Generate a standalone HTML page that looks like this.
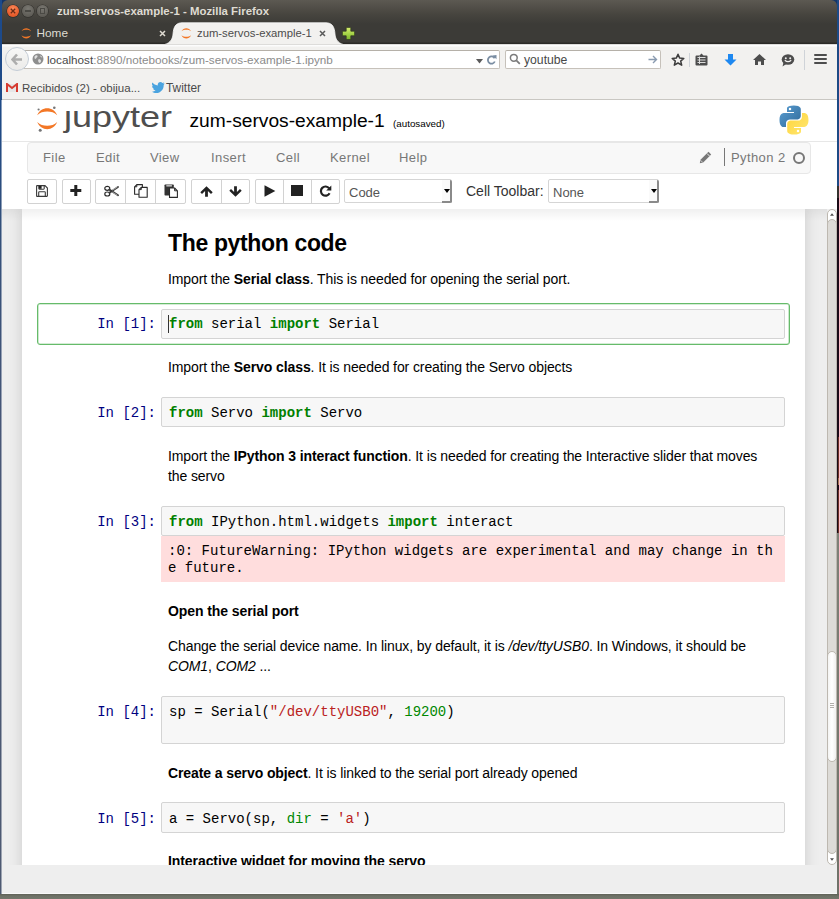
<!DOCTYPE html>
<html><head><meta charset="utf-8">
<style>
*{box-sizing:border-box;}
html,body{margin:0;padding:0;}
body{width:839px;height:899px;overflow:hidden;position:relative;background:#5f6257;font-family:"Liberation Sans",sans-serif;}
.a{position:absolute;}
svg{display:block;}
#lstrip{left:0;top:0;width:2px;height:899px;background:linear-gradient(#1c4a8c 0,#1f4a86 120px,#34507a 230px,#4a5877 450px,#4e5a72 899px);}
#lstrip2{left:1px;top:100px;width:1px;height:799px;background:rgba(255,255,255,0.45);}
#topblue{left:0;top:0;width:839px;height:10px;background:#163566;}
#rstrip{left:837px;top:0;width:2px;height:899px;background:linear-gradient(#1d4a86 0,#1d4a86 186px,#34322e 186px,#34322e 198px,transparent 198px,transparent 533px,#7e8076 533px,#6f7168);}
#rstrip2{left:837px;top:198px;width:2px;height:335px;background:#1a0b17;}
#rstrip3{left:838px;top:437px;width:1px;height:96px;background:linear-gradient(#6a3025 0,#6a3025 41px,#a07050 41px,#a07050 48px,#1a0b17 48px,#1a0b17 53px,#6a3025 53px);}
#bstrip{left:0;top:894px;width:839px;height:5px;background:linear-gradient(#5f6157,#6e7166 40%,#73766b);}
#titlebar{left:2px;top:0;width:835px;height:44px;background:linear-gradient(#5c5952 0,#47453f 14px,#3c3b37 24px,#3c3b37 42px,#2b2a27 43px);border-radius:6px 6px 0 0;}
#navbar{left:2px;top:44px;width:835px;height:56px;background:linear-gradient(#dddcda 0,#dddcda 1px,#fcfcfc 1px,#fcfcfc 2px,#f2f1ef 3px);border-bottom:1px solid #c9c7c2;}
#page{left:2px;top:100px;width:835px;height:765px;background:#fff;overflow:hidden;}
#statusbar{left:2px;top:865px;width:835px;height:29px;background:#eeeeee;border-bottom:1px solid #f8f8f8;}
.wbtn{width:12px;height:12px;border-radius:50%;top:5px;}
.ttl{font-weight:bold;color:#dfdbd2;font-size:11.4px;line-height:12px;white-space:nowrap;}
.nb{white-space:nowrap;line-height:15px;}
.mi{top:150px;font-size:13px;letter-spacing:0.4px;line-height:15px;color:#777;white-space:nowrap;}
.tb{top:179px;height:25px;background:#fff;border:1px solid #d2d2d2;border-radius:2px;}
.tbd{top:179px;height:25px;width:1px;background:#d2d2d2;}
.sel{top:179px;height:24px;background:#fff;border:1px solid #d5d5d5;border-radius:2px;font-size:13px;line-height:16px;color:#555;}
.sel span{position:absolute;left:4px;top:5px;}
.h2{font-size:23px;letter-spacing:-0.35px;font-weight:bold;line-height:26px;color:#000;white-space:nowrap;}
.p{font-size:14px;letter-spacing:-0.1px;line-height:20px;color:#000;white-space:nowrap;}
.h4{font-size:14px;letter-spacing:-0.08px;font-weight:bold;line-height:16px;color:#000;white-space:nowrap;}
.pr{left:38px;width:118px;text-align:right;font-family:"Liberation Mono",monospace;font-size:14px;line-height:17px;color:#000080;white-space:nowrap;}
.ia{left:161px;width:624px;background:#f7f7f7;border:1px solid #d4d4d4;border-radius:2px;}
.cd{left:169px;font-family:"Liberation Mono",monospace;font-size:14px;line-height:17px;color:#000;white-space:nowrap;}
.k{color:#008000;font-weight:bold;}
.s{color:#ba2121;}
.n{color:#080;}
.sa{position:absolute;right:-1px;top:0;width:10px;height:23px;background:#fafafa;border-right:2px solid #8a8a8a;border-bottom:2px solid #8a8a8a;border-radius:0 2px 2px 0;}
.sa:after{content:"";position:absolute;left:2px;top:9px;border-left:3px solid transparent;border-right:3px solid transparent;border-top:4px solid #000;}
.tabtxt{font-size:11px;line-height:12px;white-space:nowrap;}
</style></head>
<body>
<div id="topblue" class="a"></div><div id="lstrip" class="a"></div><div id="lstrip2" class="a"></div>
<div id="rstrip" class="a"></div><div id="rstrip2" class="a"></div><div id="rstrip3" class="a"></div>
<div id="bstrip" class="a"></div>
<div id="titlebar" class="a"></div>
<!-- window buttons -->
<div class="a" style="left:7.3px;top:5.2px;width:11.8px;height:11.8px;border-radius:50%;background:radial-gradient(circle at 50% 30%,#fb8a5a,#ec6232 55%,#d4501f);box-shadow:0 0 0 0.6px rgba(30,20,15,0.6);"></div>
<svg class="a" style="left:10.2px;top:8.1px" width="6" height="6" viewBox="0 0 6 6"><path d="M0.8 0.8L5.2 5.2M5.2 0.8L0.8 5.2" stroke="#6a2c16" stroke-width="1.3"/></svg>
<div class="a" style="left:22px;top:5.2px;width:11.8px;height:11.8px;border-radius:50%;background:radial-gradient(circle at 50% 30%,#7a7872,#63615b 60%,#57554f);box-shadow:0 0 0 0.6px rgba(30,30,28,0.6);"></div>
<div class="a" style="left:25px;top:10.3px;width:6px;height:1.6px;background:#4a4944;"></div>
<div class="a" style="left:36.5px;top:5.2px;width:11.8px;height:11.8px;border-radius:50%;background:radial-gradient(circle at 50% 30%,#7a7872,#63615b 60%,#57554f);box-shadow:0 0 0 0.6px rgba(30,30,28,0.6);"></div>
<div class="a" style="left:40.3px;top:8px;width:4.4px;height:6.2px;border:1.3px solid #4a4944;"></div>
<div class="a ttl" style="left:57px;top:5px;">zum-servos-example-1 - Mozilla Firefox</div>

<!-- inactive tab -->
<svg class="a" style="left:20.5px;top:28.2px" width="10.6" height="10.6" viewBox="0 0 12 12"><path d="M0.5 3.8C1.8 1.3 3.8 0.2 6 0.2S10.2 1.3 11.5 3.8C9.8 2.6 8 2.1 6 2.1S2.2 2.6 0.5 3.8Z" fill="#f37726"/><path d="M0.5 8.2C1.8 10.7 3.8 11.8 6 11.8S10.2 10.7 11.5 8.2C9.8 9.4 8 9.9 6 9.9S2.2 9.4 0.5 8.2Z" fill="#f37726"/></svg>
<div class="a tabtxt" style="left:36.5px;top:27px;color:#dfdbd2;font-size:11.8px;">Home</div>
<svg class="a" style="left:158.5px;top:30px" width="7" height="7" viewBox="0 0 7 7"><path d="M1 1L6 6M6 1L1 6" stroke="#dfdbd2" stroke-width="1.5"/></svg>
<!-- active tab -->
<svg class="a" style="left:0;top:0" width="839" height="50" viewBox="0 0 839 50"><path d="M160 45 C167 45 171.5 42 172.8 36 L173.3 31.5 C174.2 25.5 177 22.8 182 22.8 L326 22.8 C331 22.8 333.8 25.5 334.7 31.5 L335.2 36 C336.5 42 341 45 348 45 Z" fill="#f2f1ef" stroke="#fbfbfb" stroke-width="0.8"/></svg>
<svg class="a" style="left:181.2px;top:28.2px" width="10.6" height="10.6" viewBox="0 0 12 12"><path d="M0.5 3.8C1.8 1.3 3.8 0.2 6 0.2S10.2 1.3 11.5 3.8C9.8 2.6 8 2.1 6 2.1S2.2 2.6 0.5 3.8Z" fill="#f37726"/><path d="M0.5 8.2C1.8 10.7 3.8 11.8 6 11.8S10.2 10.7 11.5 8.2C9.8 9.4 8 9.9 6 9.9S2.2 9.4 0.5 8.2Z" fill="#f37726"/></svg>
<div class="a tabtxt" style="left:197px;top:27px;color:#4c4c4c;font-size:11.3px;">zum-servos-example-1</div>
<svg class="a" style="left:319.3px;top:30px" width="7" height="7" viewBox="0 0 7 7"><path d="M1 1L6 6M6 1L1 6" stroke="#5a5a5a" stroke-width="1.5"/></svg>
<!-- new tab plus -->
<svg class="a" style="left:341.5px;top:27.2px" width="13" height="13" viewBox="0 0 13 13"><defs><linearGradient id="gp" x1="0" y1="0" x2="0" y2="1"><stop offset="0" stop-color="#d8ee70"/><stop offset="0.5" stop-color="#a8d44a"/><stop offset="1" stop-color="#7cb22c"/></linearGradient></defs><path d="M4.2 0.4H8.8V4.2H12.6V8.8H8.8V12.6H4.2V8.8H0.4V4.2H4.2Z" fill="url(#gp)" stroke="#2f3a1c" stroke-width="0.7"/></svg>

<div id="navbar" class="a"></div>
<!-- url field -->
<div class="a" style="left:22px;top:50px;width:478px;height:19px;background:#fff;border:1px solid #c6c1ba;border-top-color:#b5b0a8;border-radius:2px;"></div>
<!-- back button -->
<div class="a" style="left:5px;top:47px;width:24px;height:24px;border-radius:50%;background:linear-gradient(#f7f7f6,#ecebe9);border:1px solid #c3ccd6;"></div>
<svg class="a" style="left:11px;top:53px" width="12" height="13" viewBox="0 0 12 13"><path d="M6 1.5L1.5 6.5L6 11.5M1.8 6.5H11" fill="none" stroke="#adadad" stroke-width="2.6" stroke-linejoin="miter"/></svg>
<!-- globe -->
<svg class="a" style="left:32px;top:53px" width="12" height="12" viewBox="0 0 12 12"><circle cx="6" cy="6" r="5.5" fill="#8e8e8e"/><path d="M2.5 3.5C3.5 2 5 1.8 5.5 2.8C6 4 4.5 4.5 4 5.5C3.5 6.5 2.2 6 2.5 3.5Z" fill="#e0e0e0"/><path d="M6.5 6.5C7.5 6 9 6.5 9 8C9 9.5 7.5 10.5 6.8 9.5C6.2 8.5 5.8 7 6.5 6.5Z" fill="#e0e0e0"/><path d="M8 2.5C9 2.8 10 3.5 10.3 4.5C9.5 4.5 8.5 4 8 2.5Z" fill="#e0e0e0"/></svg>
<div class="a nb" style="left:47px;top:52px;font-size:11.7px;color:#484848;">localhost<span style="color:#8b8b8b">:8890/notebooks/zum-servos-example-1.ipynb</span></div>
<svg class="a" style="left:476px;top:59px" width="7" height="5" viewBox="0 0 7 5"><path d="M0 0H7L3.5 4.5Z" fill="#5a5a5a"/></svg>
<svg class="a" style="left:487px;top:54px" width="10" height="11" viewBox="0 0 10 11"><path d="M7.6 4.2A3.6 3.6 0 1 0 7.8 7.5" fill="none" stroke="#7a8da2" stroke-width="1.8"/><path d="M5.5 1.5L9.5 1V5.2Z" fill="#7a8da2"/></svg>
<!-- search -->
<div class="a" style="left:505px;top:50px;width:156px;height:19px;background:#fff;border:1px solid #c6c1ba;border-top-color:#b5b0a8;border-radius:2px;"></div>
<svg class="a" style="left:509px;top:53px" width="12" height="12" viewBox="0 0 12 12"><circle cx="4.8" cy="4.8" r="3.4" fill="none" stroke="#7b7b7b" stroke-width="1.5"/><path d="M7.3 7.3L10.8 10.8" stroke="#7b7b7b" stroke-width="1.8"/></svg>
<div class="a nb" style="left:524px;top:53px;font-size:12.2px;color:#484848;">youtube</div>
<svg class="a" style="left:648px;top:55px" width="10" height="9" viewBox="0 0 10 9"><path d="M0.5 4.5H8.5M5 1L8.5 4.5L5 8" fill="none" stroke="#8a9bb0" stroke-width="1.4"/></svg>
<!-- star -->
<svg class="a" style="left:671px;top:53px" width="14" height="14" viewBox="0 0 14 14"><path d="M7 1.3L8.7 5.1L12.8 5.4L9.7 8.1L10.7 12.2L7 10L3.3 12.2L4.3 8.1L1.2 5.4L5.3 5.1Z" fill="none" stroke="#3d3d3d" stroke-width="1.5" stroke-linejoin="round"/></svg>
<div class="a" style="left:689px;top:53px;width:1px;height:14px;background:#cfd3d8;"></div>
<!-- reading list -->
<svg class="a" style="left:695px;top:53px" width="13" height="13" viewBox="0 0 13 13"><path d="M6.5 0.5L8.5 2.5H11.5Q12.5 2.5 12.5 3.5V11.5Q12.5 12.5 11.5 12.5H1.5Q0.5 12.5 0.5 11.5V3.5Q0.5 2.5 1.5 2.5H4.5Z" fill="#4d4d4d"/><path d="M2.5 4.5H10.5M2.5 7H10.5M2.5 9.5H10.5" stroke="#dcdcdc" stroke-width="1"/><path d="M4.5 3.5V11" stroke="#dcdcdc" stroke-width="1"/></svg>
<!-- download -->
<svg class="a" style="left:724px;top:54px" width="13" height="12" viewBox="0 0 13 12"><path d="M4 0H9V5.5H12.5L6.5 11.5L0.5 5.5H4Z" fill="#1e88f0"/></svg>
<!-- home -->
<svg class="a" style="left:753px;top:54px" width="13" height="11" viewBox="0 0 13 11"><path d="M6.5 0L13 6H11V11H8V7.5H5V11H2V6H0Z" fill="#4d4d4d"/></svg>
<!-- chat -->
<svg class="a" style="left:781px;top:54px" width="14" height="13" viewBox="0 0 14 13"><ellipse cx="7" cy="5.5" rx="6.3" ry="5.2" fill="#4d4d4d"/><path d="M2.5 8.5L1.5 12.5L6 9.5Z" fill="#4d4d4d"/><circle cx="4.8" cy="4.2" r="1" fill="#f2f1f0"/><circle cx="9.2" cy="4.2" r="1" fill="#f2f1f0"/><path d="M3.8 6.2Q7 9.2 10.2 6.2" fill="none" stroke="#f2f1f0" stroke-width="1.2"/></svg>
<div class="a" style="left:804px;top:50px;width:1px;height:20px;background:#cfd3d8;"></div>
<!-- menu -->
<div class="a" style="left:814px;top:54px;width:13px;height:2px;background:#4d4d4d;border-radius:1px;"></div>
<div class="a" style="left:814px;top:58px;width:13px;height:2px;background:#4d4d4d;border-radius:1px;"></div>
<div class="a" style="left:814px;top:62px;width:13px;height:2px;background:#4d4d4d;border-radius:1px;"></div>
<!-- bookmarks -->
<svg class="a" style="left:6px;top:83px" width="12" height="9" viewBox="0 0 12 9"><path d="M1 1H11V9H1Z" fill="#e6e6e6"/><path d="M1 9V1L6 5L11 1V9" fill="none" stroke="#d63b30" stroke-width="2"/></svg>
<div class="a nb" style="left:22px;top:81px;font-size:11.5px;color:#4a4a4a;">Recibidos (2) - obijua...</div>
<svg class="a" style="left:152px;top:82px" width="13" height="11" viewBox="0 0 13 11"><path d="M12.5 1.3C12 1.5 11.5 1.7 11 1.7C11.5 1.4 12 0.8 12.2 0.3C11.6 0.6 11 0.9 10.4 1C9.9 0.4 9.2 0.1 8.4 0.1C6.9 0.1 5.7 1.3 5.7 2.8C5.7 3 5.7 3.2 5.8 3.4C3.5 3.3 1.6 2.2 0.3 0.6C0.1 1 0 1.5 0 1.9C0 2.9 0.5 3.7 1.2 4.2C0.8 4.2 0.4 4.1 0 3.9C0 5.2 1 6.3 2.2 6.6C2 6.6 1.7 6.7 1.5 6.7C1.3 6.7 1.1 6.7 1 6.6C1.3 7.7 2.4 8.5 3.6 8.5C2.6 9.2 1.5 9.7 0.2 9.7H0C1.2 10.5 2.6 11 4.1 11C9 11 11.7 6.9 11.7 3.4V3C12.1 2.6 12.4 2 12.5 1.3Z" fill="#4aa3df"/></svg>
<div class="a nb" style="left:166px;top:81px;font-size:11.9px;color:#4a4a4a;">Twitter</div>

<div id="page" class="a"></div>
<!-- jupyter header -->
<svg class="a" style="left:36px;top:106px" width="24" height="26" viewBox="0 0 24 26">
 <path d="M1.2 9.3C3 4.8 7 2.3 11.2 2.3S19.4 4.8 21.2 9.3C18.5 6.6 15 5.6 11.2 5.6S3.9 6.6 1.2 9.3Z" fill="#f37726"/>
 <path d="M1.2 16C3 20.5 7 23.2 11.2 23.2S19.4 20.5 21.2 16C18.5 18.7 15 19.8 11.2 19.8S3.9 18.7 1.2 16Z" fill="#f37726"/>
 <circle cx="2.6" cy="3.5" r="1.1" fill="#767677"/><circle cx="18.3" cy="1.7" r="1.3" fill="#767677"/><circle cx="4.2" cy="24.2" r="1.5" fill="#767677"/>
</svg>
<div class="a" style="left:64px;top:100px;font-size:30px;line-height:34px;color:#4e4e4e;white-space:nowrap;transform:scaleX(1.2);transform-origin:0 0;">&#x237;upyter</div>
<div class="a" style="left:189.5px;top:110px;font-size:19.2px;line-height:22px;color:#000;white-space:nowrap;">zum-servos-example-1</div>
<div class="a" style="left:393px;top:118px;font-size:9.8px;line-height:12px;color:#000;white-space:nowrap;">(autosaved)</div>
<!-- python logo -->
<svg class="a" style="left:779px;top:105px" width="30" height="30" viewBox="0 0 30 30">
 <defs><linearGradient id="pb" x1="0" y1="0" x2="1" y2="1"><stop offset="0" stop-color="#5a9fd4"/><stop offset="1" stop-color="#306998"/></linearGradient>
 <linearGradient id="py" x1="0" y1="0" x2="1" y2="1"><stop offset="0" stop-color="#ffd43b"/><stop offset="1" stop-color="#ffe873"/></linearGradient></defs>
 <path d="M14.8 0.5C7.5 0.5 8 3.6 8 3.6V6.9H15V8H5.2C5.2 8 0.5 7.5 0.5 14.9S4.6 22 4.6 22H7V18.5C7 18.5 6.9 14.4 11 14.4H17.9C17.9 14.4 21.8 14.5 21.8 10.7V4.3C21.8 4.3 22.4 0.5 14.8 0.5Z M11 2.7A1.25 1.25 0 1 1 11 5.2A1.25 1.25 0 1 1 11 2.7Z" fill="url(#pb)" fill-rule="evenodd"/>
 <path d="M15.2 29.5C22.5 29.5 22 26.4 22 26.4V23.1H15V22H24.8C24.8 22 29.5 22.5 29.5 15.1S25.4 8 25.4 8H23V11.5C23 11.5 23.1 15.6 19 15.6H12.1C12.1 15.6 8.2 15.5 8.2 19.3V25.7C8.2 25.7 7.6 29.5 15.2 29.5Z M19 27.3A1.25 1.25 0 1 1 19 24.8A1.25 1.25 0 1 1 19 27.3Z" fill="url(#py)" fill-rule="evenodd"/>
</svg>
<div class="a" style="left:2px;top:141px;width:835px;height:1px;background:#e7e7e7;"></div>
<!-- menubar -->
<div class="a" style="left:27px;top:142px;width:784px;height:32px;background:#f8f8f8;border:1px solid #e7e7e7;border-radius:4px;"></div>
<div class="a mi" style="left:43px;">File</div>
<div class="a mi" style="left:96px;">Edit</div>
<div class="a mi" style="left:150px;">View</div>
<div class="a mi" style="left:211px;">Insert</div>
<div class="a mi" style="left:276px;">Cell</div>
<div class="a mi" style="left:330px;">Kernel</div>
<div class="a mi" style="left:399px;">Help</div>
<svg class="a" style="left:699px;top:151px" width="13" height="13" viewBox="0 0 13 13"><path d="M9.5 0.8L12.2 3.5L4.2 11.5L0.8 12.2L1.5 8.8Z" fill="#777"/><path d="M8 2.5L10.5 5" stroke="#f8f8f8" stroke-width="0.9"/><path d="M1.6 9.3L3.7 11.4" stroke="#f8f8f8" stroke-width="0.7"/></svg>
<div class="a" style="left:724px;top:148px;width:1px;height:18px;background:#777;"></div>
<div class="a mi" style="left:731px;">Python 2</div>
<div class="a" style="left:793px;top:152px;width:12px;height:12px;border-radius:50%;border:2px solid #777;"></div>
<!-- toolbar -->
<div class="a tb" style="left:27px;width:30px;"></div>
<div class="a tb" style="left:62px;width:29px;"></div>
<div class="a tb" style="left:95px;width:91px;"></div>
<div class="a tbd" style="left:125px;"></div><div class="a tbd" style="left:155px;"></div>
<div class="a tb" style="left:191px;width:59px;"></div>
<div class="a tbd" style="left:221px;"></div>
<div class="a tb" style="left:255px;width:85px;"></div>
<div class="a tbd" style="left:283px;"></div><div class="a tbd" style="left:311px;"></div>
<!-- save icon -->
<svg class="a" style="left:36px;top:185px" width="12" height="12" viewBox="0 0 12 12"><path d="M1.2 0.6H9L11.4 3V10.8Q11.4 11.4 10.8 11.4H1.2Q0.6 11.4 0.6 10.8V1.2Q0.6 0.6 1.2 0.6Z" fill="none" stroke="#3a3a3a" stroke-width="1.1"/><path d="M2.8 0.8V3.6Q2.8 4.2 3.4 4.2H7.6Q8.2 4.2 8.2 3.6V0.8" fill="none" stroke="#3a3a3a" stroke-width="1.1"/><rect x="3" y="1" width="2.6" height="2.8" fill="#222"/><path d="M2.7 11.2V7.4Q2.7 6.8 3.3 6.8H8.7Q9.3 6.8 9.3 7.4V11.2" fill="none" stroke="#3a3a3a" stroke-width="1.1"/></svg>
<!-- plus -->
<svg class="a" style="left:70px;top:185px" width="12" height="11" viewBox="0 0 12 11"><path d="M4.3 0H7.3V4H11.3V7H7.3V11H4.3V7H0.3V4H4.3Z" fill="#222"/></svg>
<!-- scissors -->
<svg class="a" style="left:104px;top:185px" width="15" height="12" viewBox="0 0 15 12"><ellipse cx="3.3" cy="3.3" rx="2.5" ry="2" fill="none" stroke="#2a2a2a" stroke-width="1.2"/><ellipse cx="3.3" cy="9" rx="2.5" ry="2" fill="none" stroke="#2a2a2a" stroke-width="1.2"/><path d="M5.4 4.6L14 10.3M5.4 7.7L14 2" stroke="#3a3a3a" stroke-width="1.9" stroke-linecap="round"/><path d="M8.3 7.1L13.4 10.2M8.3 5.2L13.4 2.1" stroke="#e6e6e6" stroke-width="0.6"/></svg>
<!-- copy -->
<svg class="a" style="left:134px;top:184px" width="15" height="14" viewBox="0 0 15 14"><path d="M2.8 0.6H8.4V10.2H0.6V2.8Z" fill="#fff" stroke="#2a2a2a" stroke-width="1.1" stroke-linejoin="round"/><path d="M2.8 0.8V2.8H0.8" fill="none" stroke="#2a2a2a" stroke-width="1"/><path d="M7.3 3.4H13.2V13.2H5V5.6Z" fill="#fff" stroke="#2a2a2a" stroke-width="1.1" stroke-linejoin="round"/><path d="M7.3 3.6V5.6H5.2" fill="none" stroke="#2a2a2a" stroke-width="1"/></svg>
<!-- paste -->
<svg class="a" style="left:164px;top:184px" width="15" height="14" viewBox="0 0 15 14"><rect x="0.5" y="0.4" width="9.3" height="11.2" rx="0.8" fill="#333"/><rect x="2.3" y="1" width="5.6" height="1.6" fill="#b8b8b8"/><path d="M5.5 4H10.6L13.4 6.8V13.4H5.5Z" fill="#fff" stroke="#2a2a2a" stroke-width="1.1" stroke-linejoin="round"/><path d="M10.6 4.2V6.8H13.2" fill="none" stroke="#2a2a2a" stroke-width="1"/></svg>
<!-- up -->
<svg class="a" style="left:200px;top:186px" width="13" height="11" viewBox="0 0 13 11"><path d="M6.5 0.3L12.7 6.3L11 8L7.9 5V10.8H5.1V5L2 8L0.3 6.3Z" fill="#222"/></svg>
<!-- down -->
<svg class="a" style="left:229px;top:186px" width="13" height="11" viewBox="0 0 13 11"><path d="M6.5 10.7L12.7 4.7L11 3L7.9 6V0.2H5.1V6L2 3L0.3 4.7Z" fill="#222"/></svg>
<!-- play -->
<svg class="a" style="left:264px;top:185px" width="12" height="12" viewBox="0 0 12 12"><path d="M0.5 0.3L11.3 6L0.5 11.7Z" fill="#222"/></svg>
<!-- stop -->
<div class="a" style="left:291px;top:185px;width:12px;height:11px;background:#222;"></div>
<!-- restart -->
<svg class="a" style="left:319px;top:185px" width="13" height="12" viewBox="0 0 13 12"><path d="M10.2 3.3A4.6 4.6 0 1 0 10.6 8.3" fill="none" stroke="#222" stroke-width="2.2"/><path d="M12.3 0.5V5.6H7.2Z" fill="#222"/></svg>
<!-- selects -->
<div class="a sel" style="left:344px;width:108px;"><span>Code</span><i class="sa"></i></div>
<div class="a" style="left:466px;top:183px;font-size:14px;line-height:16px;color:#333;white-space:nowrap;">Cell Toolbar:</div>
<div class="a sel" style="left:548px;width:111px;"><span>None</span><i class="sa"></i></div>

<!-- notebook site -->
<div class="a" style="left:2px;top:209px;width:835px;height:656px;background:#eee;overflow:hidden;">
 <div class="a" style="left:20px;top:0;width:783px;height:700px;background:#fff;box-shadow:0 0 12px 1px rgba(87,87,87,0.2);"></div>
 <div class="a" style="left:0;top:0;width:835px;height:656px;box-shadow:none;"></div>
</div>
<!-- scrollbar -->
<div class="a" style="left:827px;top:209px;width:10px;height:656px;background:#fff;border:1px solid #bdb8b0;border-radius:5px;"></div>
<div class="a" style="left:827px;top:219px;width:10px;height:635px;background:#dddbd7;border:1px solid #bdb8b0;border-radius:5px;"></div>
<svg class="a" style="left:829px;top:212px" width="6" height="5" viewBox="0 0 6 5"><path d="M1 3.8L3 1.2L5 3.8Z" fill="#505050"/></svg>
<div class="a" style="left:827px;top:651px;width:10px;height:111px;background:linear-gradient(90deg,#f4f4f3,#fff 50%,#f0efee);border:1px solid #bdb8b0;border-radius:5px;"></div>
<div class="a" style="left:830px;top:703px;width:4px;height:1px;background:#b0aeaa;"></div>
<div class="a" style="left:830px;top:705px;width:4px;height:1px;background:#b0aeaa;"></div>
<div class="a" style="left:830px;top:707px;width:4px;height:1px;background:#b0aeaa;"></div>

<svg class="a" style="left:829px;top:857px" width="6" height="5" viewBox="0 0 6 5"><path d="M1 1.2L3 3.8L5 1.2Z" fill="#505050"/></svg>
<!-- notebook content -->
<div class="a" style="left:2px;top:209px;width:825px;height:656px;overflow:hidden;">
 <div class="a" style="left:-2px;top:-209px;width:839px;height:899px;">
  <div class="a h2" style="left:168px;top:230px;">The python code</div>
  <div class="a p" style="left:168px;top:269px;">Import the <b>Serial class</b>. This is needed for opening the serial port.</div>
  <div class="a" style="left:37px;top:303px;width:753px;height:42px;border:1px solid #66bb6a;border-radius:3px;box-shadow:inset 0 0 0 0.6px rgba(102,187,106,0.55);"></div>
  <div class="a pr" style="top:316px;">In&nbsp;[1]:</div>
  <div class="a ia" style="top:309px;height:30px;"></div>
  <div class="a cd" style="top:316px;"><span class="k">from</span> serial <span class="k">import</span> Serial</div>
  <div class="a" style="left:168px;top:315px;width:1px;height:18px;background:#333;"></div>
  <div class="a p" style="left:168px;top:357px;">Import the <b>Servo class</b>. It is needed for creating the Servo objects</div>
  <div class="a pr" style="top:405px;">In&nbsp;[2]:</div>
  <div class="a ia" style="top:397px;height:30px;"></div>
  <div class="a cd" style="top:405px;"><span class="k">from</span> Servo <span class="k">import</span> Servo</div>
  <div class="a p" style="left:168px;top:446px;">Import the <b>IPython 3 interact function</b>. It is needed for creating the Interactive slider that moves<br>the servo</div>
  <div class="a pr" style="top:514px;">In&nbsp;[3]:</div>
  <div class="a ia" style="top:506px;height:30px;"></div>
  <div class="a cd" style="top:514px;"><span class="k">from</span> IPython.html.widgets <span class="k">import</span> interact</div>
  <div class="a" style="left:161px;top:536px;width:624px;height:46px;background:#fdd;"></div>
  <div class="a cd" style="left:168px;top:543px;">:0: FutureWarning: IPython widgets are experimental and may change in th<br>e future.</div>
  <div class="a h4" style="left:168px;top:603px;">Open the serial port</div>
  <div class="a p" style="left:168px;top:636px;">Change the serial device name. In linux, by default, it is <i>/dev/ttyUSB0</i>. In Windows, it should be<br><i>COM1</i>, <i>COM2</i> ...</div>
  <div class="a pr" style="top:704px;">In&nbsp;[4]:</div>
  <div class="a ia" style="top:696px;height:48px;"></div>
  <div class="a cd" style="top:704px;">sp = Serial(<span class="s">"/dev/ttyUSB0"</span>, <span class="n">19200</span>)</div>
  <div class="a p" style="left:168px;top:763px;"><b>Create a servo object</b>. It is linked to the serial port already opened</div>
  <div class="a pr" style="top:811px;">In&nbsp;[5]:</div>
  <div class="a ia" style="top:802px;height:31px;"></div>
  <div class="a cd" style="top:811px;">a = Servo(sp, <span class="n">dir</span> = <span class="s">'a'</span>)</div>
  <div class="a h4" style="left:168px;top:853px;">Interactive widget for moving the servo</div>
 </div>
</div>
<!-- header shadow -->
<div class="a" style="left:2px;top:209px;width:825px;height:12px;background:linear-gradient(rgba(0,0,0,0.06),rgba(0,0,0,0));"></div>
<div id="statusbar" class="a"></div>
</body></html>
